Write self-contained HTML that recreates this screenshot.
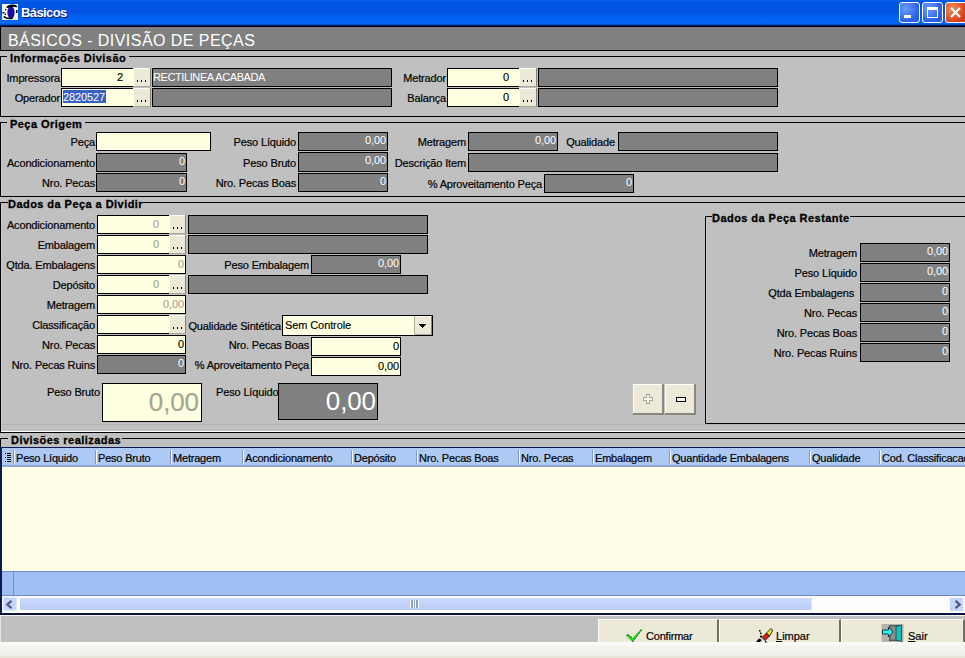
<!DOCTYPE html><html><head><meta charset="utf-8"><style>
*{margin:0;padding:0;box-sizing:border-box}
html,body{width:965px;height:658px;overflow:hidden;background:#c0c0c0;font-family:"Liberation Sans",sans-serif;font-size:11px;color:#000}
div{position:absolute}
.lb{white-space:nowrap;letter-spacing:-0.15px;padding-top:1px;-webkit-text-stroke:0.2px #000}
.f{border:1px solid #000;white-space:nowrap;line-height:16px;padding:0 1px;letter-spacing:-0.1px;overflow:hidden;-webkit-text-stroke-width:0.15px}
.gray{background:#808080;color:#fff;line-height:14px;-webkit-text-stroke-width:0}
.cream{background:#ffffe1;color:#000}
.dis{background:#ffffe1;color:#a5a58f}
.dots{background:#ece9d8;border-right:1px solid #85837a;border-bottom:1px solid #a9a797;box-shadow:inset 1px 1px 0 #fbfbf8}
.dots span{position:absolute;left:0;right:0;top:1px;font-size:11px}
.grp{border-left:1px solid #000;border-top:1px solid #000;border-bottom:1px solid #000;box-shadow:inset 1px 0 0 #cdcdcd}
.gt{background:#c0c0c0;font-weight:bold;padding:0 3px;white-space:nowrap;line-height:12px;letter-spacing:0.45px;-webkit-text-stroke:0.3px #000}
</style></head><body>
<div style="left:0;top:0;width:965px;height:27px;background:linear-gradient(#0d5fea 0px,#0056e4 2px,#0053e0 12px,#0060f2 17px,#0068fa 23px,#0058e4 24px,#0040b0 25px,#000018 26px,#000018 27px)"></div>
<svg style="position:absolute;left:0;top:0" width="20" height="22"><rect x="2" y="4" width="16" height="16" fill="#f6f6f2"/><ellipse cx="11" cy="12.5" rx="3.6" ry="6.3" fill="#1c0ca0"/><path d="M6 7.5 Q8 4.3 13 4.5 Q16 4.7 17 6 L17 7.2 Q13 6 8 8 Z" fill="#000"/><path d="M3 17 Q7 20.3 12.5 19 L13 17.5 Q8 18.8 4.5 16 Z" fill="#000"/><rect x="5" y="9" width="1.3" height="1.3" fill="#000"/><rect x="2.5" y="12" width="2" height="1.4" fill="#000"/><rect x="4.6" y="13.6" width="1.4" height="1.4" fill="#000"/><rect x="16" y="10" width="1.5" height="3" fill="#000"/></svg>
<div style="left:21px;top:5px;font:bold 13px 'Liberation Sans',sans-serif;letter-spacing:-0.6px;color:#fff;text-shadow:1px 1px 0 #0a1e80">Básicos</div>
<div style="left:899px;top:2px;width:21px;height:21px;border:1px solid #fff;border-radius:3px;background:radial-gradient(circle at 30% 30%,#6b9cff,#2a5fe8 70%)"></div>
<div style="left:904px;top:15px;width:7px;height:3px;background:#fff"></div>
<div style="left:922px;top:2px;width:21px;height:21px;border:1px solid #fff;border-radius:3px;background:radial-gradient(circle at 30% 30%,#6b9cff,#2a5fe8 70%)"></div>
<div style="left:927px;top:7px;width:11px;height:11px;border:1px solid #fff;border-top:3px solid #fff"></div>
<div style="left:945px;top:2px;width:22px;height:21px;border:1px solid #fff;border-radius:3px;background:radial-gradient(circle at 30% 30%,#f0905a,#d8401a 70%)"></div>
<svg style="position:absolute;left:949px;top:6px" width="13" height="13"><path d="M2 2 L11 11 M11 2 L2 11" stroke="#fff" stroke-width="2.2"/></svg>
<div style="left:0;top:27px;width:965px;height:24px;background:#808080;border-left:1px solid #000;border-bottom:1px solid #000"></div>
<div style="left:8px;top:32px;font-size:16px;color:#fff;letter-spacing:0.45px;white-space:nowrap;line-height:18px">BÁSICOS - DIVISÃO DE PEÇAS</div>
<div class="grp" style="left:0px;top:56px;width:970px;height:61px"></div>
<div class="gt" style="left:7px;top:52px;padding:0 3px">Informações Divisão</div>
<div class="lb" style="right:905px;top:68px;height:19px;line-height:19px">Impressora</div>
<div class="f cream" style="left:61px;top:68px;width:73px;height:19px;text-align:right;padding-right:10px">2</div>
<div class="dots" style="left:133px;top:68px;width:18px;height:19px"></div>
<div style="left:137px;top:80px;width:1px;height:2px;background:#000"></div>
<div style="left:141px;top:80px;width:1px;height:2px;background:#000"></div>
<div style="left:145px;top:80px;width:1px;height:2px;background:#000"></div>
<div class="f gray" style="left:152px;top:68px;width:240px;height:19px;text-align:left;padding-right:0px"><span style="letter-spacing:-0.4px;position:relative;left:-1px;top:1px">RECTILINEA ACABADA</span></div>
<div class="lb" style="right:905px;top:88px;height:19px;line-height:19px">Operador</div>
<div class="f cream" style="left:61px;top:88px;width:73px;height:19px;text-align:left"></div>
<div style="left:63px;top:90px;width:43px;height:13px;background:#3763c4;color:#fff;line-height:15px;letter-spacing:-0.1px">2820527</div>
<div class="dots" style="left:133px;top:88px;width:18px;height:19px"></div>
<div style="left:137px;top:100px;width:1px;height:2px;background:#000"></div>
<div style="left:141px;top:100px;width:1px;height:2px;background:#000"></div>
<div style="left:145px;top:100px;width:1px;height:2px;background:#000"></div>
<div class="f gray" style="left:152px;top:88px;width:240px;height:19px;text-align:right"></div>
<div class="lb" style="right:519px;top:68px;height:19px;line-height:19px">Metrador</div>
<div class="f cream" style="left:447px;top:68px;width:73px;height:19px;text-align:right;padding-right:10px">0</div>
<div class="dots" style="left:519px;top:68px;width:18px;height:19px"></div>
<div style="left:523px;top:80px;width:1px;height:2px;background:#000"></div>
<div style="left:527px;top:80px;width:1px;height:2px;background:#000"></div>
<div style="left:531px;top:80px;width:1px;height:2px;background:#000"></div>
<div class="f gray" style="left:538px;top:68px;width:240px;height:19px;text-align:right"></div>
<div class="lb" style="right:519px;top:88px;height:19px;line-height:19px">Balança</div>
<div class="f cream" style="left:447px;top:88px;width:73px;height:19px;text-align:right;padding-right:10px">0</div>
<div class="dots" style="left:519px;top:88px;width:18px;height:19px"></div>
<div style="left:523px;top:100px;width:1px;height:2px;background:#000"></div>
<div style="left:527px;top:100px;width:1px;height:2px;background:#000"></div>
<div style="left:531px;top:100px;width:1px;height:2px;background:#000"></div>
<div class="f gray" style="left:538px;top:88px;width:240px;height:19px;text-align:right"></div>
<div class="grp" style="left:0px;top:122px;width:970px;height:75px"></div>
<div class="gt" style="left:7px;top:118px;padding:0 3px">Peça Origem</div>
<div class="lb" style="right:870px;top:132px;height:19px;line-height:19px">Peça</div>
<div class="f cream" style="left:96px;top:132px;width:115px;height:19px;text-align:right"></div>
<div class="lb" style="right:870px;top:153px;height:19px;line-height:19px">Acondicionamento</div>
<div class="f gray" style="left:96px;top:153px;width:91px;height:19px;text-align:right">0</div>
<div class="lb" style="right:870px;top:173px;height:19px;line-height:19px">Nro. Pecas</div>
<div class="f gray" style="left:96px;top:173px;width:91px;height:19px;text-align:right">0</div>
<div class="lb" style="right:669px;top:132px;height:19px;line-height:19px">Peso Líquido</div>
<div class="f gray" style="left:298px;top:132px;width:90px;height:19px;text-align:right">0,00</div>
<div class="lb" style="right:669px;top:153px;height:19px;line-height:19px">Peso Bruto</div>
<div class="f gray" style="left:298px;top:152px;width:90px;height:20px;text-align:right">0,00</div>
<div class="lb" style="right:669px;top:173px;height:19px;line-height:19px">Nro. Pecas Boas</div>
<div class="f gray" style="left:298px;top:173px;width:90px;height:19px;text-align:right">0</div>
<div class="lb" style="right:499px;top:132px;height:19px;line-height:19px">Metragem</div>
<div class="f gray" style="left:468px;top:132px;width:90px;height:19px;text-align:right">0,00</div>
<div class="lb" style="right:350px;top:132px;height:19px;line-height:19px">Qualidade</div>
<div class="f gray" style="left:618px;top:132px;width:160px;height:19px;text-align:right"></div>
<div class="lb" style="right:499px;top:153px;height:19px;line-height:19px">Descrição Item</div>
<div class="f gray" style="left:468px;top:153px;width:310px;height:19px;text-align:right"></div>
<div class="lb" style="right:423px;top:174px;height:19px;line-height:19px">% Aproveitamento Peça</div>
<div class="f gray" style="left:544px;top:174px;width:90px;height:19px;text-align:right">0</div>
<div class="grp" style="left:0px;top:202px;width:970px;height:231px"></div>
<div class="gt" style="left:8px;top:198px;padding:0 0px">Dados da Peça a Dividir</div>
<div class="lb" style="right:870px;top:215px;height:19px;line-height:19px">Acondicionamento</div>
<div class="f dis" style="left:97px;top:215px;width:73px;height:19px;text-align:right;padding-right:10px">0</div>
<div class="dots" style="left:169px;top:215px;width:17px;height:19px"></div>
<div style="left:173px;top:227px;width:1px;height:2px;background:#000"></div>
<div style="left:177px;top:227px;width:1px;height:2px;background:#000"></div>
<div style="left:181px;top:227px;width:1px;height:2px;background:#000"></div>
<div class="f gray" style="left:188px;top:215px;width:240px;height:19px;text-align:right"></div>
<div class="lb" style="right:870px;top:235px;height:19px;line-height:19px">Embalagem</div>
<div class="f dis" style="left:97px;top:235px;width:73px;height:19px;text-align:right;padding-right:10px">0</div>
<div class="dots" style="left:169px;top:235px;width:17px;height:19px"></div>
<div style="left:173px;top:247px;width:1px;height:2px;background:#000"></div>
<div style="left:177px;top:247px;width:1px;height:2px;background:#000"></div>
<div style="left:181px;top:247px;width:1px;height:2px;background:#000"></div>
<div class="f gray" style="left:188px;top:235px;width:240px;height:19px;text-align:right"></div>
<div class="lb" style="right:870px;top:255px;height:19px;line-height:19px">Qtda. Embalagens</div>
<div class="f dis" style="left:97px;top:255px;width:89px;height:19px;text-align:right">0</div>
<div class="lb" style="right:656px;top:255px;height:19px;line-height:19px">Peso Embalagem</div>
<div class="f gray" style="left:311px;top:255px;width:90px;height:19px;text-align:right">0,00</div>
<div class="lb" style="right:870px;top:275px;height:19px;line-height:19px">Depósito</div>
<div class="f dis" style="left:97px;top:275px;width:73px;height:19px;text-align:right;padding-right:10px">0</div>
<div class="dots" style="left:169px;top:275px;width:17px;height:19px"></div>
<div style="left:173px;top:287px;width:1px;height:2px;background:#000"></div>
<div style="left:177px;top:287px;width:1px;height:2px;background:#000"></div>
<div style="left:181px;top:287px;width:1px;height:2px;background:#000"></div>
<div class="f gray" style="left:188px;top:275px;width:240px;height:19px;text-align:right"></div>
<div class="lb" style="right:870px;top:295px;height:19px;line-height:19px">Metragem</div>
<div class="f dis" style="left:97px;top:295px;width:89px;height:19px;text-align:right">0,00</div>
<div class="lb" style="right:870px;top:315px;height:19px;line-height:19px">Classificação</div>
<div class="f cream" style="left:97px;top:315px;width:73px;height:19px;text-align:right"></div>
<div class="dots" style="left:169px;top:315px;width:17px;height:19px"></div>
<div style="left:173px;top:327px;width:1px;height:2px;background:#000"></div>
<div style="left:177px;top:327px;width:1px;height:2px;background:#000"></div>
<div style="left:181px;top:327px;width:1px;height:2px;background:#000"></div>
<div class="lb" style="right:684px;top:315px;height:21px;line-height:21px">Qualidade Sintética</div>
<div class="f cream" style="left:282px;top:315px;width:151px;height:21px;text-align:left;line-height:18px;padding-left:2px">Sem Controle</div>
<div style="left:414px;top:316px;width:18px;height:19px;background:#ece9d8;border-left:1px solid #b0ae9c;border-right:1px solid #85837a;border-bottom:1px solid #a9a797;box-shadow:inset 0 1px 0 #fbfbf8"></div>
<svg style="position:absolute;left:419px;top:324px" width="8" height="5" shape-rendering="crispEdges"><path d="M0 0.5h7M1 1.5h5M2 2.5h3M3 3.5h1" stroke="#000"/></svg>
<div class="lb" style="right:870px;top:335px;height:19px;line-height:19px">Nro. Pecas</div>
<div class="f cream" style="left:97px;top:335px;width:89px;height:19px;text-align:right">0</div>
<div class="lb" style="right:656px;top:335px;height:19px;line-height:19px">Nro. Pecas Boas</div>
<div class="f cream" style="left:311px;top:337px;width:90px;height:19px;text-align:right">0</div>
<div class="lb" style="right:870px;top:355px;height:19px;line-height:19px">Nro. Pecas Ruins</div>
<div class="f gray" style="left:97px;top:355px;width:89px;height:19px;text-align:right">0</div>
<div class="lb" style="right:656px;top:355px;height:19px;line-height:19px">% Aproveitamento Peça</div>
<div class="f cream" style="left:311px;top:357px;width:90px;height:19px;text-align:right">0,00</div>
<div class="lb" style="left:47px;top:383px;height:16px;line-height:16px">Peso Bruto</div>
<div class="f dis" style="left:102px;top:383px;width:100px;height:39px;font-size:26px;line-height:37px;padding-right:2px;text-align:right">0,00</div>
<div class="lb" style="left:216px;top:383px;height:16px;line-height:16px">Peso Líquido</div>
<div class="f gray" style="left:278px;top:383px;width:100px;height:37px;font-size:26px;line-height:35px;padding-right:1px;text-align:right">0,00</div>
<div class="pm" style="left:633px;top:384px;width:31px;height:31px;background:#ece9d8;border-right:2px solid #8a887c;border-bottom:2px solid #8a887c;box-shadow:inset 1px 1px 0 #fff"></div>
<svg style="position:absolute;left:643px;top:394px" width="11" height="11" shape-rendering="crispEdges"><path d="M3.5 0.5h3v3h3v3h-3v3h-3v-3h-3v-3h3z" fill="#f6f5ee" stroke="#a9a89c" stroke-width="1"/></svg>
<div class="pm" style="left:665px;top:384px;width:31px;height:31px;background:#ece9d8;border-right:2px solid #8a887c;border-bottom:2px solid #8a887c;box-shadow:inset 1px 1px 0 #fff"></div>
<div style="left:676px;top:397px;width:10px;height:5px;border:1px solid #000;background:#f4f3ec"></div>
<div class="grp" style="left:705px;top:216px;width:270px;height:208px"></div>
<div class="gt" style="left:712px;top:212px;padding:0 0px">Dados da Peça Restante</div>
<div class="lb" style="right:108px;top:243px;height:19px;line-height:19px">Metragem</div>
<div class="f gray" style="left:860px;top:243px;width:90px;height:19px;text-align:right">0,00</div>
<div class="lb" style="right:108px;top:263px;height:19px;line-height:19px">Peso Líquido</div>
<div class="f gray" style="left:860px;top:263px;width:90px;height:19px;text-align:right">0,00</div>
<div class="lb" style="right:108px;top:283px;height:19px;line-height:19px">Qtda Embalagens&nbsp;</div>
<div class="f gray" style="left:860px;top:283px;width:90px;height:19px;text-align:right">0</div>
<div class="lb" style="right:108px;top:303px;height:19px;line-height:19px">Nro. Pecas</div>
<div class="f gray" style="left:860px;top:303px;width:90px;height:19px;text-align:right">0</div>
<div class="lb" style="right:108px;top:323px;height:19px;line-height:19px">Nro. Pecas Boas</div>
<div class="f gray" style="left:860px;top:323px;width:90px;height:19px;text-align:right">0</div>
<div class="lb" style="right:108px;top:343px;height:19px;line-height:19px">Nro. Pecas Ruins</div>
<div class="f gray" style="left:860px;top:343px;width:90px;height:19px;text-align:right">0</div>
<div style="left:1px;top:431px;width:964px;height:1px;background:#fff"></div>
<div style="left:2px;top:424px;width:963px;height:1px;background:#b2b2b2"></div>
<div style="left:0;top:438px;width:8px;height:1px;background:#000"></div>
<div style="left:0;top:438px;width:1px;height:10px;background:#000"></div>
<div class="gt" style="left:8px;top:434px;padding:0 0 0 3px">Divisões realizadas</div>
<div style="left:122px;top:438px;width:845px;height:1px;background:#000"></div>
<div style="left:0;top:447px;width:965px;height:168px;background:#ffffe8;border-left:2px solid #0a1a50;border-top:1px solid #0a1a50;"></div>
<div style="left:2px;top:448px;width:963px;height:19px;background:#aecaf4;border-bottom:2px solid #8ea6d6"></div>
<div style="left:13px;top:450px;width:1px;height:14px;background:#7f98cc"></div><div style="left:14px;top:450px;width:1px;height:14px;background:#f4f8ff"></div>
<div style="left:95px;top:450px;width:1px;height:14px;background:#7f98cc"></div><div style="left:96px;top:450px;width:1px;height:14px;background:#f4f8ff"></div>
<div style="left:170px;top:450px;width:1px;height:14px;background:#7f98cc"></div><div style="left:171px;top:450px;width:1px;height:14px;background:#f4f8ff"></div>
<div style="left:242px;top:450px;width:1px;height:14px;background:#7f98cc"></div><div style="left:243px;top:450px;width:1px;height:14px;background:#f4f8ff"></div>
<div style="left:351px;top:450px;width:1px;height:14px;background:#7f98cc"></div><div style="left:352px;top:450px;width:1px;height:14px;background:#f4f8ff"></div>
<div style="left:416px;top:450px;width:1px;height:14px;background:#7f98cc"></div><div style="left:417px;top:450px;width:1px;height:14px;background:#f4f8ff"></div>
<div style="left:518px;top:450px;width:1px;height:14px;background:#7f98cc"></div><div style="left:519px;top:450px;width:1px;height:14px;background:#f4f8ff"></div>
<div style="left:592px;top:450px;width:1px;height:14px;background:#7f98cc"></div><div style="left:593px;top:450px;width:1px;height:14px;background:#f4f8ff"></div>
<div style="left:669px;top:450px;width:1px;height:14px;background:#7f98cc"></div><div style="left:670px;top:450px;width:1px;height:14px;background:#f4f8ff"></div>
<div style="left:809px;top:450px;width:1px;height:14px;background:#7f98cc"></div><div style="left:810px;top:450px;width:1px;height:14px;background:#f4f8ff"></div>
<div style="left:879px;top:450px;width:1px;height:14px;background:#7f98cc"></div><div style="left:880px;top:450px;width:1px;height:14px;background:#f4f8ff"></div>
<div class="lb" style="left:16px;top:448px;line-height:18px;letter-spacing:-0.2px">Peso Líquido</div>
<div class="lb" style="left:98px;top:448px;line-height:18px;letter-spacing:-0.2px">Peso Bruto</div>
<div class="lb" style="left:173px;top:448px;line-height:18px;letter-spacing:-0.2px">Metragem</div>
<div class="lb" style="left:245px;top:448px;line-height:18px;letter-spacing:-0.2px">Acondicionamento</div>
<div class="lb" style="left:354px;top:448px;line-height:18px;letter-spacing:-0.2px">Depósito</div>
<div class="lb" style="left:419px;top:448px;line-height:18px;letter-spacing:-0.2px">Nro. Pecas Boas</div>
<div class="lb" style="left:521px;top:448px;line-height:18px;letter-spacing:-0.2px">Nro. Pecas</div>
<div class="lb" style="left:595px;top:448px;line-height:18px;letter-spacing:-0.2px">Embalagem</div>
<div class="lb" style="left:672px;top:448px;line-height:18px;letter-spacing:-0.2px">Quantidade Embalagens</div>
<div class="lb" style="left:812px;top:448px;line-height:18px;letter-spacing:-0.2px">Qualidade</div>
<div class="lb" style="left:882px;top:448px;line-height:18px;letter-spacing:-0.2px">Cod. Classificacao</div>
<svg style="position:absolute;left:5px;top:453px" width="7" height="9" shape-rendering="crispEdges"><path d="M0 0.5h1M2 0.5h4M2 2.5h4M0 4.5h1M2 4.5h4M2 6.5h4M0 8.5h1M2 8.5h4" stroke="#000" stroke-width="1"/></svg>
<div style="left:2px;top:571px;width:963px;height:25px;background:#9fbff2;border-top:1px solid #6f8cc8;border-bottom:1px solid #7286c4"></div>
<div style="left:13px;top:572px;width:1px;height:23px;background:#6f8cc8"></div>
<div style="left:2px;top:596px;width:963px;height:17px;background:#fdfdfb"></div>
<div style="left:2px;top:596px;width:16px;height:16px;background:#c6d5fb;border:1px solid #f4f7ff;box-shadow:inset 0 0 0 1px #e0e8fc"></div>
<svg style="position:absolute;left:5px;top:600px" width="8" height="9"><path d="M6.5 0.8 L2.3 4.5 L6.5 8.2" stroke="#4a5a8a" stroke-width="2.2" fill="none"/></svg>
<div style="left:19px;top:596px;width:793px;height:16px;background:linear-gradient(#cad9fd,#b9cdf9);border:2px solid #fff;border-left:1px solid #fff;border-right:1px solid #dde6fb"></div>
<div style="left:410px;top:600px;width:9px;height:8px;background:repeating-linear-gradient(90deg,#fff 0 1px,#8aa0d8 1px 2.5px)"></div>
<div style="left:949px;top:597px;width:15px;height:15px;background:#c6d5fb;border:1px solid #f4f7ff"></div>
<svg style="position:absolute;left:953px;top:600px" width="9" height="9"><path d="M2.5 0.8 L6.7 4.5 L2.5 8.2" stroke="#4a5a8a" stroke-width="2.2" fill="none"/></svg>
<div style="left:0;top:613px;width:965px;height:2px;background:#0a1440"></div>
<div style="left:0;top:615px;width:965px;height:1px;background:#f4f4f0"></div>
<div style="left:0;top:642px;width:965px;height:16px;background:linear-gradient(#fdfdfb 0px,#f4f3ee 5px,#f0efe9 13px,#e4e1d4 16px)"></div>
<div style="left:0;top:616px;width:1px;height:26px;background:#e6e6e6"></div>
<div style="left:598px;top:619px;width:121px;height:23px;background:#ece9d8;border-left:1px solid #fff;border-top:1px solid #fff;border-right:2px solid #716f64"></div>
<div style="left:719px;top:619px;width:122px;height:23px;background:#ece9d8;border-left:1px solid #fff;border-top:1px solid #fff;border-right:2px solid #716f64"></div>
<div style="left:841px;top:619px;width:124px;height:23px;background:#ece9d8;border-left:1px solid #fff;border-top:1px solid #fff;border-right:2px solid #716f64"></div>
<div class="lb" style="left:646px;top:629px;letter-spacing:-0.2px">Confirmar</div>
<div class="lb" style="left:776px;top:629px;letter-spacing:0"><u>L</u>impar</div>
<div class="lb" style="left:908px;top:629px;letter-spacing:0"><u>S</u>air</div>
<svg style="position:absolute;left:624px;top:627px" width="19" height="17"><path d="M2 8.5 L4 7.5 L8.5 11 L17.5 1.5 L18 2.5 L8.5 15 Z" fill="#22dd22"/><path d="M8.5 15 L18 2.5 M2.5 8.2 L4 7.5 L8 10.5" stroke="#000" stroke-width="1" stroke-dasharray="1 1" fill="none"/></svg>
<svg style="position:absolute;left:755px;top:627px" width="18" height="17"><path d="M7 10.5 L11.5 6 L14.5 9 L10 13.5 Z" fill="#dd1c1c" stroke="#000" stroke-width="0.8"/><path d="M11.5 6 L16 1.5 L17.5 3 L17 5 L14.5 9 Z" fill="#f2ea20" stroke="#000" stroke-width="0.8"/><path d="M1 15 L4 11.5 L7 13 L5 15 Z" fill="#000"/><rect x="4" y="3" width="1.5" height="1.5" fill="#000"/><rect x="5" y="5.5" width="1.5" height="1.5" fill="#000"/><rect x="5" y="8.5" width="2" height="2" fill="#000"/><rect x="10" y="14" width="1.5" height="1.5" fill="#000"/></svg>
<svg style="position:absolute;left:881px;top:624px" width="24" height="18"><rect x="0.5" y="0" width="22" height="18" fill="#b4b2ae"/><rect x="8" y="1" width="12" height="16" fill="#5a5a5a"/><rect x="9.5" y="2.5" width="6" height="13" fill="#8e8e8e"/><path d="M15 2.5 L20.5 1 L20.5 17.5 L15 16 Z" fill="#18c0b8" stroke="#064848" stroke-width="0.8"/><path d="M1.5 6 h6 v-3 l4.5 5 l-4.5 5 v-3 h-6z" fill="#38f0f0" stroke="#064848" stroke-width="1"/></svg>
</body></html>
